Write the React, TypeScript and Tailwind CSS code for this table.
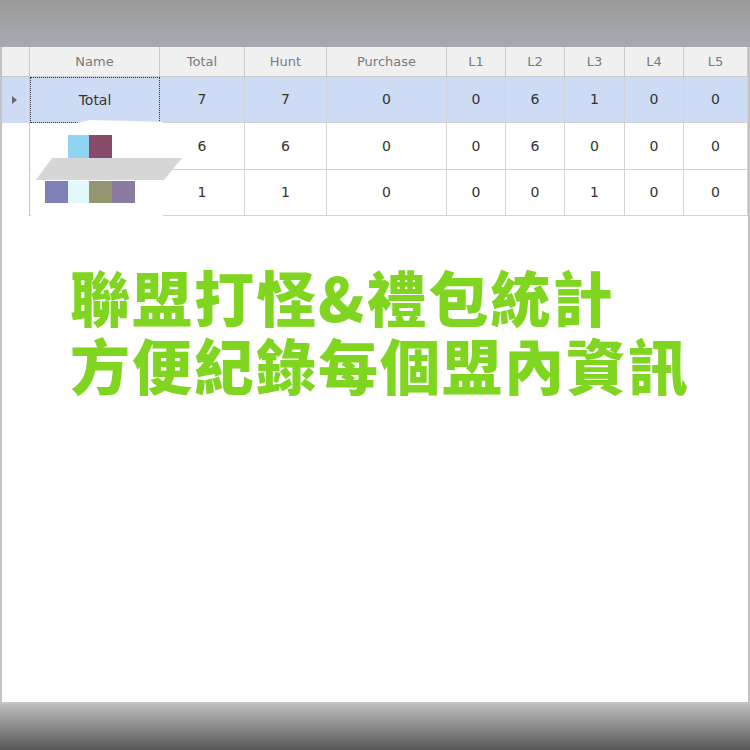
const COLS = "grid-cols-[28px_130px_85px_82px_120px_59px_59px_60px_59px_1fr]";
const HEADERS = ["Name", "Total", "Hunt", "Purchase", "L1", "L2", "L3", "L4", "L5"];

const ROWS = [
  { name: "Total", values: [7, 7, 0, 0, 6, 1, 0, 0], selected: true, h: "h-[46px]" },
  { name: "", values: [6, 6, 0, 0, 6, 0, 0, 0], selected: false, h: "h-[47px]" },
  { name: "", values: [1, 1, 0, 0, 0, 1, 0, 0], selected: false, h: "h-[46px]" },
];

// blurred-out member names, drawn over the Name column
function Redaction() {
  return (
    <svg
      className="absolute left-[28px] top-[73px]"
      width="160"
      height="100"
      viewBox="0 0 160 100"
    >
      <polygon points="46,3 60,0 100,1 133,2 133,97 1,97 1,5 46,5" fill="#ffffff" />
      <rect x="38" y="15" width="21" height="23" fill="#8fd5f1" />
      <rect x="59" y="15" width="23" height="23" fill="#884a69" />
      <polygon points="22,38 152,38 134,60 6,60" fill="#d6d6d6" />
      <rect x="15" y="61" width="23" height="22" fill="#7f80b6" />
      <rect x="38" y="61" width="21" height="22" fill="#e2f9fb" />
      <rect x="59" y="61" width="23" height="22" fill="#969673" />
      <rect x="82" y="61" width="23" height="22" fill="#8c7ba0" />
    </svg>
  );
}

function Grid() {
  return (
    <div className="relative font-['DejaVu_Sans',sans-serif]">
      <div className={`grid ${COLS} h-[30px] bg-[#f0f0f0] text-[13px] text-[#7a7a7a]`}>
        <div className="border-r border-b border-[#c9c9c9]" />
        {HEADERS.map((h) => (
          <div
            key={h}
            className="flex items-center justify-center border-r border-b border-[#c9c9c9]"
          >
            {h}
          </div>
        ))}
      </div>
      {ROWS.map((row, i) => (
        <div
          key={i}
          className={`grid ${COLS} ${row.h} text-[14px] text-[#333] ${
            row.selected ? "bg-[#cddcf4]" : "bg-white"
          }`}
        >
          <div className="flex items-center pl-[10px] border-r border-[#c9c9c9]">
            {row.selected && (
              <span className="w-0 h-0 border-y-[4px] border-y-transparent border-l-[5px] border-l-[#6a6a6a]" />
            )}
          </div>
          <div
            className={`flex items-center justify-center ${
              row.selected
                ? "border border-dotted border-[#333]"
                : "border-r border-b border-[#c9c9c9]"
            }`}
          >
            {row.name}
          </div>
          {row.values.map((v, j) => (
            <div
              key={j}
              className="flex items-center justify-center border-r border-b border-[#d2d2d2]"
            >
              {v}
            </div>
          ))}
        </div>
      ))}
      <Redaction />
    </div>
  );
}

export default function App() {
  return (
    <div className="w-[750px] h-[750px] flex flex-col bg-white overflow-hidden">
      <div className="h-[47px] bg-gradient-to-b from-[#9a9a9a] to-[#a6abb2]" />
      <div className="flex-1 bg-white border-x-2 border-b-2 border-[#c4c4c4] flex flex-col">
        <Grid />
        <div className="pl-[68px] pt-[46px] font-['Noto_Sans_CJK_TC',sans-serif] font-black text-[60px] leading-[68px] tracking-[2px] text-[#7fd520]">
          <p>聯盟打怪&amp;禮包統計</p>
          <p>方便紀錄每個盟內資訊</p>
        </div>
      </div>
      <div className="h-[46px] bg-gradient-to-b from-[#bdbdbd] to-[#585858]" />
    </div>
  );
}
